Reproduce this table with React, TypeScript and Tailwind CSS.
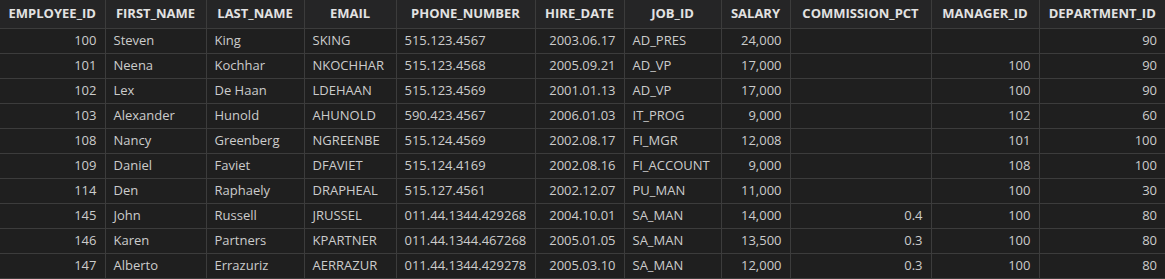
const columns = [
  { key: "EMPLOYEE_ID", width: 105, align: "right" },
  { key: "FIRST_NAME", width: 101, align: "left" },
  { key: "LAST_NAME", width: 98, align: "left" },
  { key: "EMAIL", width: 92, align: "left" },
  { key: "PHONE_NUMBER", width: 139, align: "left" },
  { key: "HIRE_DATE", width: 89, align: "right" },
  { key: "JOB_ID", width: 97, align: "left" },
  { key: "SALARY", width: 69, align: "right" },
  { key: "COMMISSION_PCT", width: 141, align: "right" },
  { key: "MANAGER_ID", width: 108, align: "right" },
  { key: "DEPARTMENT_ID", width: 126, align: "right" },
];

const rows = [
  ["100", "Steven", "King", "SKING", "515.123.4567", "2003.06.17", "AD_PRES", "24,000", "", "", "90"],
  ["101", "Neena", "Kochhar", "NKOCHHAR", "515.123.4568", "2005.09.21", "AD_VP", "17,000", "", "100", "90"],
  ["102", "Lex", "De Haan", "LDEHAAN", "515.123.4569", "2001.01.13", "AD_VP", "17,000", "", "100", "90"],
  ["103", "Alexander", "Hunold", "AHUNOLD", "590.423.4567", "2006.01.03", "IT_PROG", "9,000", "", "102", "60"],
  ["108", "Nancy", "Greenberg", "NGREENBE", "515.124.4569", "2002.08.17", "FI_MGR", "12,008", "", "101", "100"],
  ["109", "Daniel", "Faviet", "DFAVIET", "515.124.4169", "2002.08.16", "FI_ACCOUNT", "9,000", "", "108", "100"],
  ["114", "Den", "Raphaely", "DRAPHEAL", "515.127.4561", "2002.12.07", "PU_MAN", "11,000", "", "100", "30"],
  ["145", "John", "Russell", "JRUSSEL", "011.44.1344.429268", "2004.10.01", "SA_MAN", "14,000", "0.4", "100", "80"],
  ["146", "Karen", "Partners", "KPARTNER", "011.44.1344.467268", "2005.01.05", "SA_MAN", "13,500", "0.3", "100", "80"],
  ["147", "Alberto", "Errazuriz", "AERRAZUR", "011.44.1344.429278", "2005.03.10", "SA_MAN", "12,000", "0.3", "100", "80"],
];

export default function App() {
  return (
    <div className="w-[1165px] h-[279px] bg-[#1e1e1e] font-['Open_Sans',sans-serif] text-[13px] text-[#cccccc]">
      <table className="table-fixed border-collapse w-[1165px]">
        <colgroup>
          {columns.map((c) => (
            <col key={c.key} style={{ width: c.width }} />
          ))}
        </colgroup>
        <thead>
          <tr className="h-[28px] bg-[#252526]">
            {columns.map((c) => (
              <th
                key={c.key}
                className="border border-[#3c3c3c] border-t-0 first:border-l-0 last:border-r-0 px-2 text-center font-bold text-[#e2e2e2] whitespace-nowrap overflow-hidden"
              >
                {c.key}
              </th>
            ))}
          </tr>
        </thead>
        <tbody>
          {rows.map((r, i) => (
            <tr key={i} className="h-[25px] bg-[#1f1f1f]">
              {r.map((v, j) => (
                <td
                  key={j}
                  className={`border border-[#3c3c3c] first:border-l-0 last:border-r-0 px-2 whitespace-nowrap overflow-hidden ${
                    columns[j].align === "right" ? "text-right" : "text-left"
                  }`}
                >
                  {v}
                </td>
              ))}
            </tr>
          ))}
        </tbody>
      </table>
    </div>
  );
}
